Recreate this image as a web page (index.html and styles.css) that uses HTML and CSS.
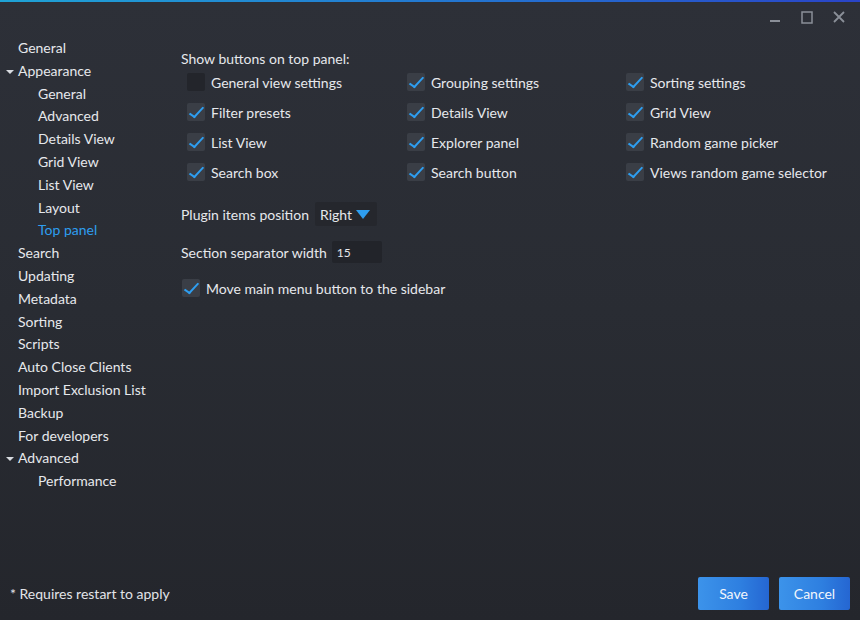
FILE: index.html
```html
<!DOCTYPE html>
<html>
<head>
<meta charset="utf-8">
<link rel="stylesheet" href="styles.css">
</head>
<body>
<div class="window">
  <div class="titlebar">
    <span class="wc wc-min"><svg width="12" height="12" viewBox="0 0 12 12"><rect x="1" y="9" width="10" height="2" fill="#8a8f98"/></svg></span>
    <span class="wc wc-max"><svg width="12" height="13" viewBox="0 0 12 13"><rect x="1" y="1" width="10" height="11" fill="none" stroke="#8a8f98" stroke-width="1.5"/></svg></span>
    <span class="wc wc-close"><svg width="12" height="12" viewBox="0 0 12 12"><path d="M1 1 L11 11 M11 1 L1 11" stroke="#8a8f98" stroke-width="1.8"/></svg></span>
  </div>
  <div class="main">
    <nav class="sidebar">
      <div class="item">General</div>
      <div class="item"><span class="arrow"></span>Appearance</div>
      <div class="item sub">General</div>
      <div class="item sub">Advanced</div>
      <div class="item sub">Details View</div>
      <div class="item sub">Grid View</div>
      <div class="item sub">List View</div>
      <div class="item sub">Layout</div>
      <div class="item sub active">Top panel</div>
      <div class="item">Search</div>
      <div class="item">Updating</div>
      <div class="item">Metadata</div>
      <div class="item">Sorting</div>
      <div class="item">Scripts</div>
      <div class="item">Auto Close Clients</div>
      <div class="item">Import Exclusion List</div>
      <div class="item">Backup</div>
      <div class="item">For developers</div>
      <div class="item"><span class="arrow"></span>Advanced</div>
      <div class="item sub">Performance</div>
    </nav>
    <section class="content">
      <div class="heading">Show buttons on top panel:</div>
      <div class="grid">
        <label class="cb"><span class="box"></span>General view settings</label>
        <label class="cb"><span class="box on"></span>Grouping settings</label>
        <label class="cb"><span class="box on"></span>Sorting settings</label>
        <label class="cb"><span class="box on"></span>Filter presets</label>
        <label class="cb"><span class="box on"></span>Details View</label>
        <label class="cb"><span class="box on"></span>Grid View</label>
        <label class="cb"><span class="box on"></span>List View</label>
        <label class="cb"><span class="box on"></span>Explorer panel</label>
        <label class="cb"><span class="box on"></span>Random game picker</label>
        <label class="cb"><span class="box on"></span>Search box</label>
        <label class="cb"><span class="box on"></span>Search button</label>
        <label class="cb"><span class="box on"></span>Views random game selector</label>
      </div>
      <div class="row row-plugin">Plugin items position<span class="dropdown">Right<span class="tri"></span></span></div>
      <div class="row row-sep">Section separator width<span class="input">15</span></div>
      <label class="cb cb-move"><span class="box on"></span>Move main menu button to the sidebar</label>
    </section>
  </div>
  <div class="footer">
    <span class="note">* Requires restart to apply</span>
    <div class="buttons">
      <button class="btn">Save</button>
      <button class="btn">Cancel</button>
    </div>
  </div>
</div>
</body>
</html>
```
FILE: styles.css
```css
html, body {
  margin: 0;
  padding: 0;
  width: 860px;
  height: 620px;
  overflow: hidden;
}
body {
  font-family: Lato, "Open Sans", sans-serif;
  font-size: 14px;
  color: #e6e8ec;
  background: #2a2d34;
}
.window {
  width: 860px;
  height: 620px;
  box-sizing: border-box;
  display: flex;
  flex-direction: column;
  background: linear-gradient(180deg, #2d3038 0%, #292c33 50%, #24262c 100%);
  position: relative;
}
.window::before {
  content: "";
  display: block;
  height: 2px;
  background: linear-gradient(90deg, #1fa3d6 0%, #2470d0 60%, #2a44c8 100%);
}
.titlebar {
  height: 30px;
  display: flex;
  justify-content: flex-end;
  align-items: center;
  padding-right: 15px;
  gap: 20px;
}
.wc {
  width: 12px;
  height: 13px;
  display: flex;
  align-items: center;
  justify-content: center;
}
.main {
  flex: 1;
  display: flex;
}
.sidebar {
  width: 163px;
  padding-top: 5px;
  display: flex;
  flex-direction: column;
}
.item {
  height: 22.8px;
  line-height: 22.8px;
  padding-left: 18px;
  position: relative;
  white-space: nowrap;
}
.item.sub {
  padding-left: 38px;
}
.item.active {
  color: #2e9ef0;
}
.arrow {
  position: absolute;
  left: 6px;
  top: 10px;
  width: 0;
  height: 0;
  border-left: 4px solid transparent;
  border-right: 4px solid transparent;
  border-top: 4px solid #d8dbe0;
}
.content {
  flex: 1;
  padding-top: 18px;
  padding-left: 18px;
}
.heading {
  height: 17px;
  line-height: 18px;
}
.grid {
  display: grid;
  grid-template-columns: 220px 219px 220px;
  grid-auto-rows: 30px;
  margin-left: 6px;
}
.cb {
  display: flex;
  align-items: center;
  white-space: nowrap;
}
.box {
  width: 18px;
  height: 18px;
  border-radius: 2px;
  background: #23252b;
  margin-right: 6px;
  flex: none;
  position: relative;
}
.box.on {
  background: #3a3e46;
}
.box.on::after {
  content: "";
  position: absolute;
  left: 6px;
  top: 1px;
  width: 5px;
  height: 12px;
  border-right: 2px solid #2e9ef0;
  border-bottom: 2px solid #2e9ef0;
  transform: rotate(35deg) skewX(-8deg);
  transform-origin: center;
}
.row {
  display: flex;
  align-items: center;
  white-space: nowrap;
}
.row-plugin {
  margin-top: 15px;
  height: 24px;
}
.dropdown {
  margin-left: 6px;
  height: 24px;
  width: 62px;
  box-sizing: border-box;
  background: #25272d;
  border-radius: 2px;
  padding-left: 5px;
  display: flex;
  align-items: center;
}
.tri {
  margin-left: 4px;
  width: 0;
  height: 0;
  border-left: 7.5px solid transparent;
  border-right: 7.5px solid transparent;
  border-top: 9px solid #2e9ef0;
}
.row-sep {
  margin-top: 15px;
  height: 22px;
}
.input {
  margin-left: 5px;
  height: 22px;
  width: 50px;
  box-sizing: border-box;
  background: #22242a;
  border-radius: 2px;
  padding-left: 5px;
  font-size: 12px;
  display: flex;
  align-items: center;
}
.cb-move {
  margin-top: 13px;
  height: 24px;
  margin-left: 1px;
}
.footer {
  height: 52px;
  display: flex;
  align-items: flex-start;
  justify-content: space-between;
  padding: 9px 10px 0 10px;
  box-sizing: border-box;
}
.note {
  font-family: Lato, sans-serif;
  font-size: 14px;
  margin-top: 8px;
  color: #e2e4e8;
}
.buttons {
  display: flex;
  gap: 10px;
}
.btn {
  width: 71px;
  height: 33px;
  border: none;
  border-radius: 2px;
  background: linear-gradient(90deg, #3c93ea 0%, #2e7fe0 60%, #2566d2 100%);
  color: #f2f6fc;
  font-family: Lato, sans-serif;
  font-size: 14px;
  padding: 0;
}
```
